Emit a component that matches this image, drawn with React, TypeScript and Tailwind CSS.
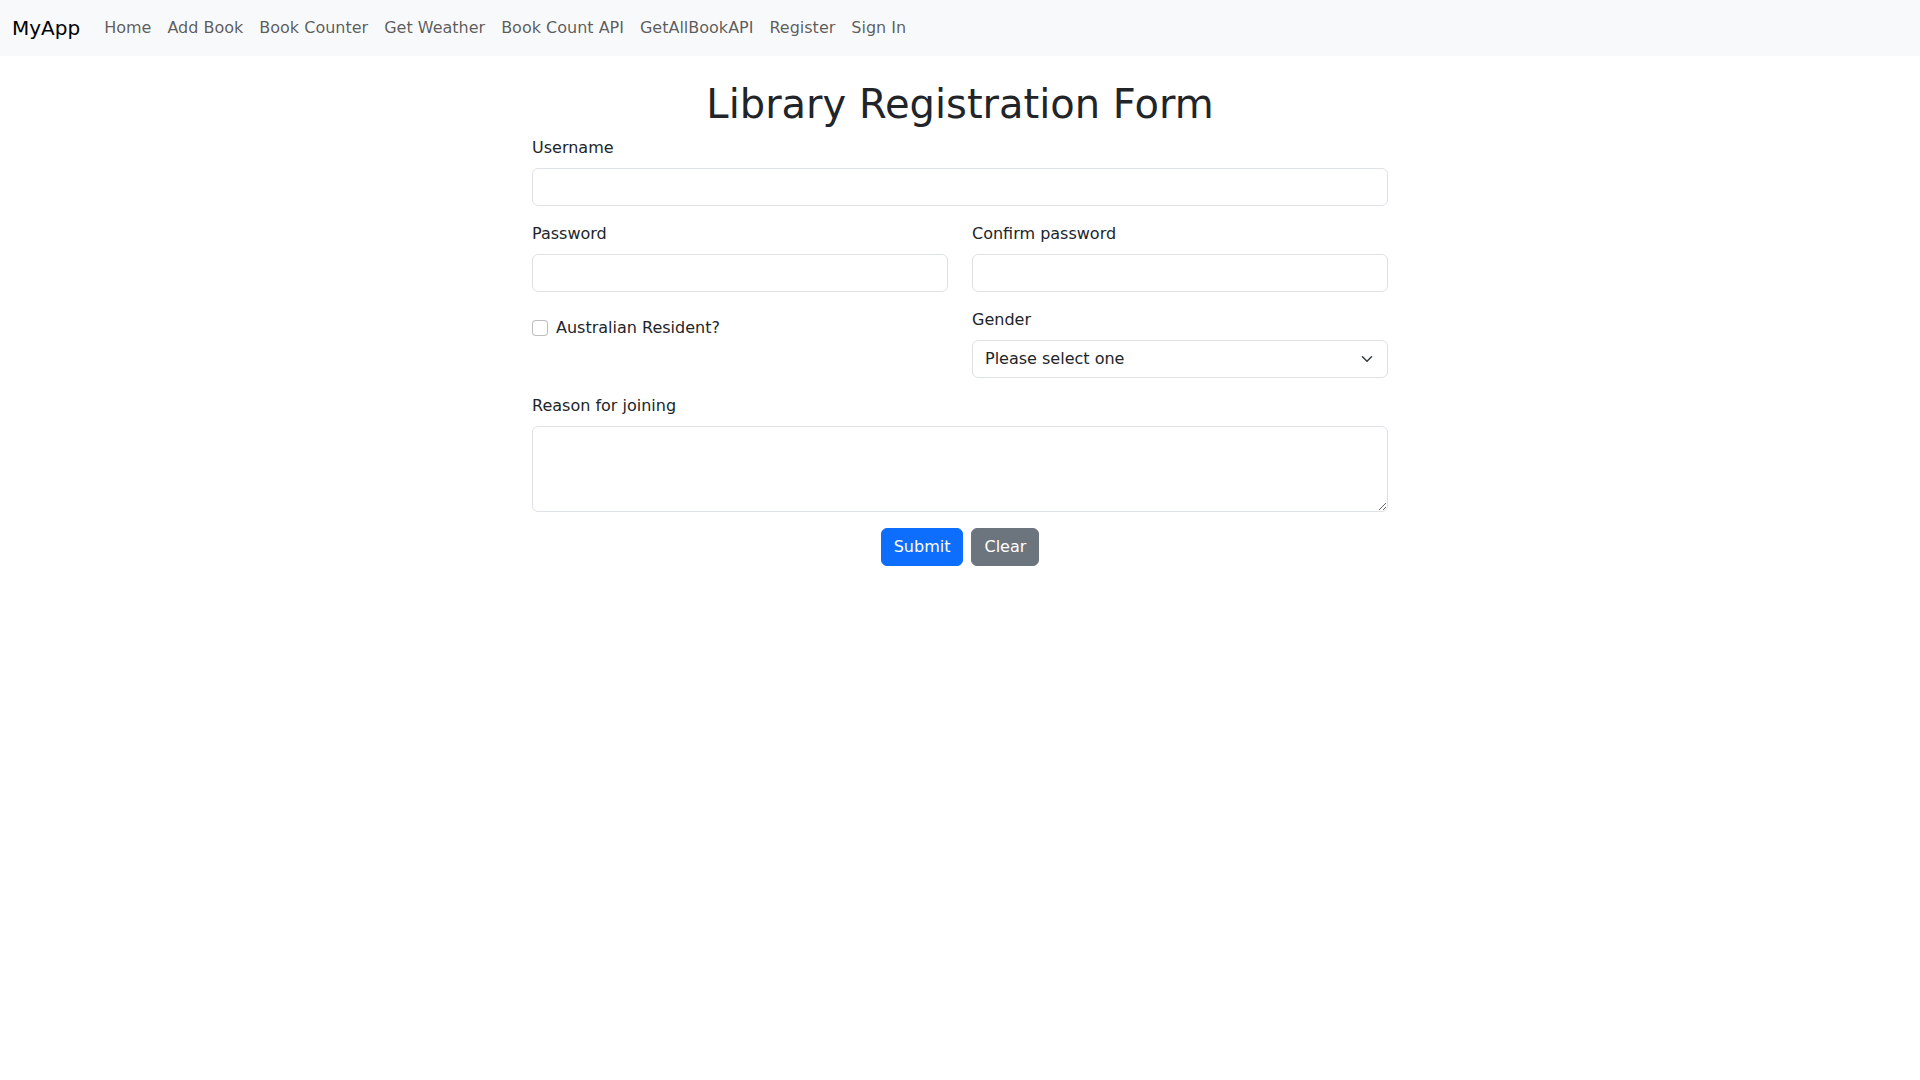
import React from "react";

const font = { fontFamily: '"DejaVu Sans", "Liberation Sans", sans-serif' };

const links = ["Home", "Add Book", "Book Counter", "Get Weather", "Book Count API", "GetAllBookAPI", "Register", "Sign In"];

const inputCls =
  "block w-full h-[38px] px-3 py-1.5 text-base text-[#212529] bg-white border border-[#dee2e6] rounded-[6px] outline-none";

export default function App() {
  return (
    <div className="min-h-screen bg-white text-[#212529] text-base leading-6" style={font}>
      {/* Navbar */}
      <nav className="bg-[#f8f9fa] py-2">
        <div className="px-3 flex items-center">
          <a className="text-[20px] leading-[30px] py-[5px] mr-4 text-black">MyApp</a>
          <ul className="flex items-center">
            {links.map((l) => (
              <li key={l}>
                <a className="block px-2 py-2 text-base leading-6 text-black/65">{l}</a>
              </li>
            ))}
          </ul>
        </div>
      </nav>

      <div className="w-[856px] mx-auto mt-6">
        <h1 className="text-[40px] leading-[48px] mb-2 text-center font-normal">Library Registration Form</h1>
        <form>
          <div className="mb-4">
            <label className="block mb-2">Username</label>
            <input type="text" className={inputCls} />
          </div>

          <div className="grid grid-cols-2 gap-x-6">
            <div className="mb-4">
              <label className="block mb-2">Password</label>
              <input type="password" className={inputCls} />
            </div>
            <div className="mb-4">
              <label className="block mb-2">Confirm password</label>
              <input type="password" className={inputCls} />
            </div>

            <div className="mb-4">
              <div className="flex items-start mt-2 min-h-6">
                <input
                  type="checkbox"
                  className="appearance-none w-4 h-4 mt-1 mr-2 border border-black/25 rounded-[4px] bg-white shrink-0"
                />
                <label>Australian Resident?</label>
              </div>
            </div>
            <div className="mb-4">
              <label className="block mb-2">Gender</label>
              <div className="relative">
                <select className={inputCls + " appearance-none pr-9"} defaultValue="">
                  <option value="">Please select one</option>
                  <option>Male</option>
                  <option>Female</option>
                  <option>Other</option>
                </select>
                <svg
                  className="absolute right-[15px] top-1/2 -translate-y-1/2 pointer-events-none"
                  width="12"
                  height="12"
                  viewBox="0 0 16 16"
                  fill="none"
                >
                  <path d="m2 5 6 6 6-6" stroke="#343a40" strokeWidth="2" strokeLinecap="round" strokeLinejoin="round" />
                </svg>
              </div>
            </div>
          </div>

          <div className="mb-4">
            <label className="block mb-2">Reason for joining</label>
            <textarea
              rows={3}
              className="block w-full h-[86px] px-3 py-1.5 text-base text-[#212529] bg-white border border-[#dee2e6] rounded-[6px] outline-none resize-y"
            />
          </div>

          <div className="flex justify-center gap-2">
            <button
              type="button"
              className="h-[38px] px-3 py-1.5 text-base leading-6 text-white bg-[#0d6efd] border border-[#0d6efd] rounded-[6px]"
            >
              Submit
            </button>
            <button
              type="button"
              className="h-[38px] px-3 py-1.5 text-base leading-6 text-white bg-[#6c757d] border border-[#6c757d] rounded-[6px]"
            >
              Clear
            </button>
          </div>
        </form>
      </div>
    </div>
  );
}
